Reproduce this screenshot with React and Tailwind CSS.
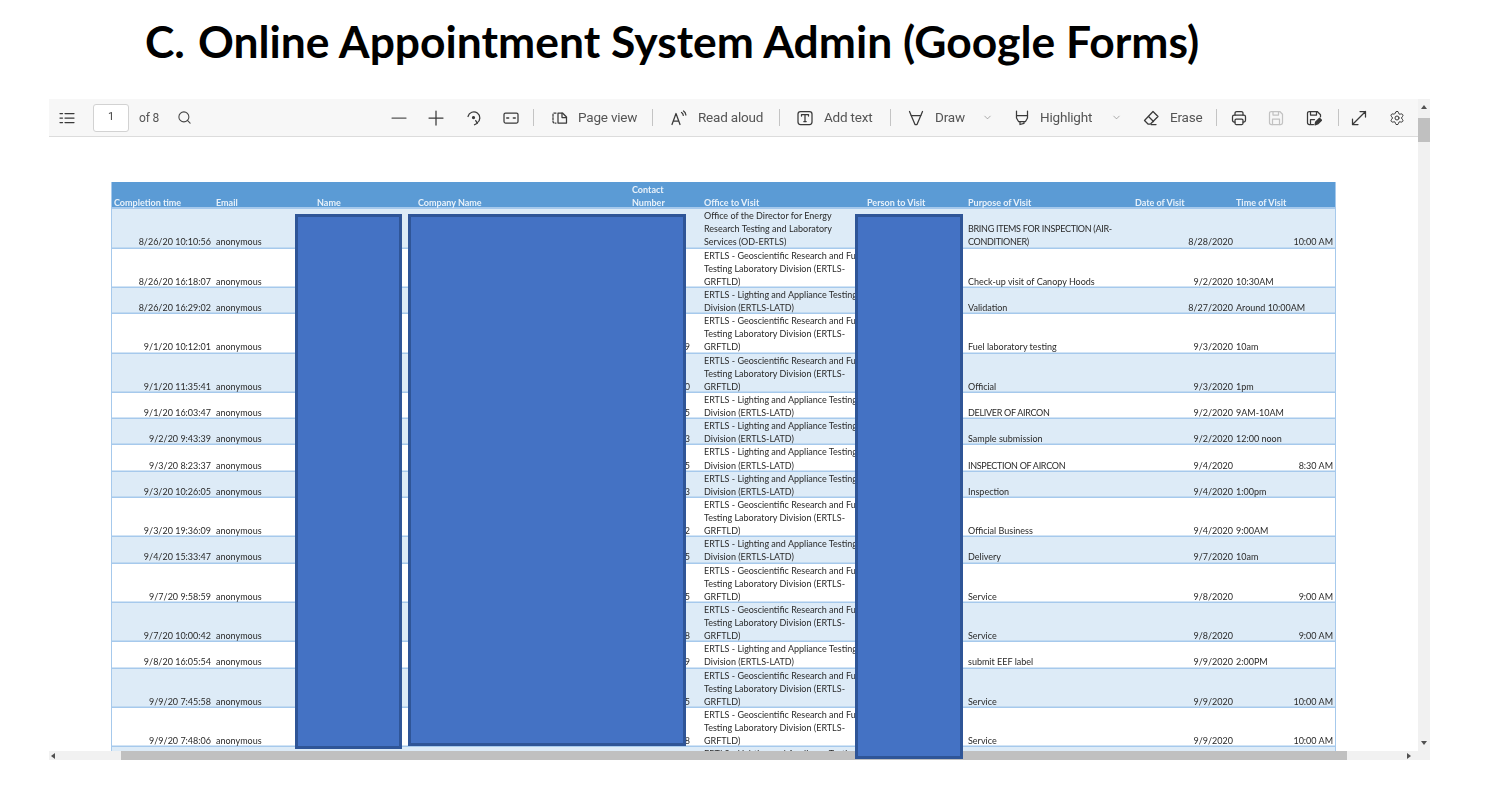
import React from "react";
import { ChevronDown, Search, Settings } from "lucide-react";

const geo = ["ERTLS - Geoscientific Research and Fuel", "Testing Laboratory Division (ERTLS-", "GRFTLD)"];
const lad = ["ERTLS - Lighting and Appliance Testing", "Division (ERTLS-LATD)"];

const rows = [
    { time: "8/26/20 10:10:56", phone: "", office: ["Office of the Director for Energy", "Research Testing and Laboratory", "Services (OD-ERTLS)"], purpose: ["BRING ITEMS FOR INSPECTION (AIR-", "CONDITIONER)"], caps: true, date: "8/28/2020", visit: "10:00 AM", right: true },
    { time: "8/26/20 16:18:07", phone: "", office: geo, purpose: ["Check-up visit of Canopy Hoods"], date: "9/2/2020", visit: "10:30AM" },
    { time: "8/26/20 16:29:02", phone: "", office: lad, purpose: ["Validation"], date: "8/27/2020", visit: "Around 10:00AM" },
    { time: "9/1/20 10:12:01", phone: "9", office: geo, purpose: ["Fuel laboratory testing"], date: "9/3/2020", visit: "10am" },
    { time: "9/1/20 11:35:41", phone: "0", office: geo, purpose: ["Official"], date: "9/3/2020", visit: "1pm" },
    { time: "9/1/20 16:03:47", phone: "5", office: lad, purpose: ["DELIVER OF AIRCON"], caps: true, date: "9/2/2020", visit: "9AM-10AM" },
    { time: "9/2/20 9:43:39", phone: "3", office: lad, purpose: ["Sample submission"], date: "9/2/2020", visit: "12:00 noon" },
    { time: "9/3/20 8:23:37", phone: "5", office: lad, purpose: ["INSPECTION OF AIRCON"], caps: true, date: "9/4/2020", visit: "8:30 AM", right: true },
    { time: "9/3/20 10:26:05", phone: "3", office: lad, purpose: ["Inspection"], date: "9/4/2020", visit: "1:00pm" },
    { time: "9/3/20 19:36:09", phone: "2", office: geo, purpose: ["Official Business"], date: "9/4/2020", visit: "9:00AM" },
    { time: "9/4/20 15:33:47", phone: "5", office: lad, purpose: ["Delivery"], date: "9/7/2020", visit: "10am" },
    { time: "9/7/20 9:58:59", phone: "5", office: geo, purpose: ["Service"], date: "9/8/2020", visit: "9:00 AM", right: true },
    { time: "9/7/20 10:00:42", phone: "8", office: geo, purpose: ["Service"], date: "9/8/2020", visit: "9:00 AM", right: true },
    { time: "9/8/20 16:05:54", phone: "9", office: lad, purpose: ["submit EEF label"], date: "9/9/2020", visit: "2:00PM" },
    { time: "9/9/20 7:45:58", phone: "5", office: geo, purpose: ["Service"], date: "9/9/2020", visit: "10:00 AM", right: true },
    { time: "9/9/20 7:48:06", phone: "8", office: geo, purpose: ["Service"], date: "9/9/2020", visit: "10:00 AM", right: true },
    { time: "9/9/20 8:02:11", phone: "5", office: lad, purpose: ["Service"], date: "9/9/2020", visit: "10:00 AM", right: true },
];

const gridCols = "grid grid-cols-[104px_100px_102px_214px_72px_163px_101px_167px_101px_101px]";

const Icon = ({ children, className = "", stroke = "#3a3a3a" }) => (
    <svg viewBox="0 0 16 16" fill="none" stroke={stroke} strokeWidth="1.25" strokeLinecap="round" strokeLinejoin="round" className={`w-4 h-4 shrink-0 ${className}`}>
        {children}
    </svg>
);

const Sep = ({ className = "" }) => <div className={`w-px h-[17px] bg-[#c4c4c4] shrink-0 ${className}`} />;

const Label = ({ children, className = "" }) => (
    <span className={`text-[13.5px] text-[#555] whitespace-nowrap tracking-[-0.2px] ${className}`}>{children}</span>
);

const Toolbar = () => (
    <div className="h-[38px] shrink-0 bg-[#f7f7f7] border-b border-[#dcdcdc] flex items-center font-['Roboto',sans-serif]">
        <Icon className="ml-[10px]">
            <path d="M1 3.5h2.5M6 3.5h9M1 8h2.5M6 8h9M1 12.5h2.5M6 12.5h9" />
        </Icon>
        <div className="ml-[18px] w-[36px] h-[28px] bg-white border border-[#d2d2d2] rounded-[3px] flex items-center justify-center text-[11px] text-[#444]">1</div>
        <span className="ml-[10px] w-[19px] text-[12px] text-[#555] whitespace-nowrap tracking-[-0.2px]">of 8</span>
        <Search size={15} strokeWidth={1.7} color="#444" className="ml-[19px] shrink-0" />

        <Icon className="ml-[199px]" stroke="#555">
            <path d="M1 8h14" />
        </Icon>
        <Icon className="ml-[21px]">
            <path d="M1 8h14M8 1v14" />
        </Icon>
        <Icon className="ml-[22px]">
            <path d="M2 6.5A6 6 0 1 1 11 13" />
            <path d="M8.5 14.8l2.8-1.6-1.6-2.6" />
            <circle cx="7.5" cy="7.5" r="1" fill="#3a3a3a" />
        </Icon>
        <Icon className="ml-[21px]">
            <rect x="1" y="3" width="14" height="10" rx="1.5" />
            <path d="M3.8 8h1.8M10.4 8h1.8" strokeWidth="1.6" />
        </Icon>
        <Sep className="ml-[14px]" />
        <Icon className="ml-[18px]">
            <path d="M4 3H2.5C1.7 3 1 3.7 1 4.5v7C1 12.3 1.7 13 2.5 13H4" strokeDasharray="2 1.4" />
            <path d="M6 3h4.5L14.5 7v6H6z" />
            <path d="M10 3v4.5h4.5" />
        </Icon>
        <Label className="ml-[10px] w-[58px]">Page view</Label>
        <Sep className="ml-[16px]" />
        <Icon className="ml-[18px]">
            <path d="M1 14.5L5 3.5l4 11M2.4 11h5.2" />
            <path d="M10.5 2.5c1 .6 1.6 1.6 1.8 2.8M12.5 1c1.4.9 2.2 2.3 2.4 4" />
        </Icon>
        <Label className="ml-[11px] w-[64px]">Read aloud</Label>
        <Sep className="ml-[17px]" />
        <Icon className="ml-[17px]">
            <rect x="1" y="1.5" width="14" height="13" rx="2.5" />
            <path d="M4.5 6V4.5h7V6M8 4.5v7M6.8 11.5h2.4" />
        </Icon>
        <Label className="ml-[11px] w-[49px]">Add text</Label>
        <Sep className="ml-[17px]" />
        <Icon className="ml-[17px]">
            <path d="M1.5 1.5L7 14.5h2l5.5-13" />
            <path d="M3.2 5.5h9.6" />
        </Icon>
        <Label className="ml-[11px] w-[31px]">Draw</Label>
        <ChevronDown size={11} strokeWidth={1.3} color="#777" className="ml-[16px] shrink-0" />
        <Icon className="ml-[21px]">
            <path d="M2.5 1v7l2 3.5h7l2-3.5V1" />
            <path d="M2.5 5.5h11" />
            <path d="M6 11.5v3l4-1.2v-1.8" />
        </Icon>
        <Label className="ml-[10px] w-[54px]">Highlight</Label>
        <ChevronDown size={11} strokeWidth={1.3} color="#777" className="ml-[17px] shrink-0" />
        <Icon className="ml-[21px]">
            <path d="M10 1.5L15 6.5l-7 7-1 .5-2 0L1.5 10.5z" />
            <path d="M5.5 6.5l5 5" />
            <path d="M8 14.5h5" />
        </Icon>
        <Label className="ml-[11px] w-[30px]">Erase</Label>
        <Sep className="ml-[16px]" />
        <Icon className="ml-[14px]">
            <path d="M4 5V3.2A1.7 1.7 0 0 1 5.7 1.5h4.6A1.7 1.7 0 0 1 12 3.2V5" />
            <path d="M4 12H3.2a1.7 1.7 0 0 1-1.7-1.7V6.7A1.7 1.7 0 0 1 3.2 5h9.6a1.7 1.7 0 0 1 1.7 1.7v3.6a1.7 1.7 0 0 1-1.7 1.7H12" />
            <rect x="4" y="9" width="8" height="5.5" rx="1.2" />
        </Icon>
        <Icon className="ml-[21px]" stroke="#c2c2c2">
            <path d="M3.2 1.5h8.6l2.7 2.7v8.6a1.7 1.7 0 0 1-1.7 1.7H3.2a1.7 1.7 0 0 1-1.7-1.7V3.2a1.7 1.7 0 0 1 1.7-1.7z" />
            <path d="M5 1.5v3.5h5.5V1.5M4.5 14.5V9h7v5.5" />
        </Icon>
        <Icon className="ml-[22px]">
            <path d="M7.5 14.5H3.2a1.7 1.7 0 0 1-1.7-1.7V3.2a1.7 1.7 0 0 1 1.7-1.7h8l3.3 3.3v2" />
            <path d="M4.5 1.5v3.5h6V1.5M4.5 14V9.5h4" />
            <path d="M9 14.8l.7-2.8 3.8-3.8 2 2-3.8 3.8z" fill="#3a3a3a" />
        </Icon>
        <Sep className="ml-[16px]" />
        <Icon className="ml-[12px]">
            <path d="M1.5 14.5l13-13M9 1.5h5.5V7M1.5 9v5.5H7" />
        </Icon>
        <Settings size={16} strokeWidth={1.5} color="#3a3a3a" className="ml-[22px] shrink-0" />
    </div>
);

const HeaderRow = () => (
    <div className={`${gridCols} h-[27.2px] items-end bg-[#5b9bd5] text-[#e9f2fa] font-bold leading-[13.13px] shadow-[inset_0_-2px_0_#a6c9ec]`}>
        <div className="pl-[2px]">Completion time</div>
        <div>Email</div>
        <div className="pl-[1px]">Name</div>
        <div>Company Name</div>
        <div>Contact<br />Number</div>
        <div>Office to Visit</div>
        <div>Person to Visit</div>
        <div>Purpose of Visit</div>
        <div>Date of Visit</div>
        <div>Time of Visit</div>
    </div>
);

const DataRow = ({ row, index }) => (
    <div className={`${gridCols} items-end leading-[13.13px] text-[#2a2a2a] shadow-[inset_0_-1.5px_0_#a6c9ec] ${index % 2 === 0 ? "bg-[#ddebf7]" : "bg-white"}`}>
        <div className="text-right pr-[5px]">{row.time}</div>
        <div>anonymous</div>
        <div />
        <div>{index === 13 ? "I" : ""}</div>
        <div className="text-right pr-[14px]">{row.phone}</div>
        <div className="overflow-hidden whitespace-nowrap">
            {row.office.map((line) => <div key={line}>{line}</div>)}
        </div>
        <div />
        <div className={`whitespace-nowrap ${row.caps ? "tracking-[-0.3px]" : ""}`}>
            {row.purpose.map((line) => <div key={line}>{line}</div>)}
        </div>
        <div className="text-right pr-[3px]">{row.date}</div>
        <div className={row.right ? "text-right pr-[4px]" : "whitespace-nowrap"}>{row.visit}</div>
    </div>
);

const Redaction = ({ className }) => (
    <div className={`absolute bg-[#4472c4] border-[3px] border-[#2f5597] ${className}`} />
);

export default function App() {
    return (
        <div className="w-[1488px] h-[791px] bg-white overflow-hidden">
            <div className="h-[99px] pl-[145px] pt-[12px] flex font-['Lato',sans-serif] font-bold text-[44.4px] leading-[58px] text-black whitespace-nowrap">
                <span className="w-[53px]">C.</span>
                <span>Online Appointment System Admin (Google Forms)</span>
            </div>

            <div className="relative ml-[49px] w-[1381px] h-[661px] flex flex-col blur-[0.4px]">
                <div className="flex flex-1 min-h-0">
                    <div className="flex-1 min-w-0 flex flex-col">
                        <Toolbar />
                        <div className="flex-1 min-h-0 overflow-hidden bg-white pl-[62px] pt-[45px] font-['Lato',sans-serif] text-[9px]">
                            <div className="w-[1225px] border-x border-[#a6c9ec]">
                                <HeaderRow />
                                {rows.map((row, i) => <DataRow key={row.time} row={row} index={i} />)}
                            </div>
                        </div>
                    </div>
                    <div className="w-[12px] bg-[#f1f1f1] flex flex-col items-center">
                        <div className="mt-[6px] w-0 h-0 border-x-[3px] border-x-transparent border-b-[4px] border-b-[#505050]" />
                        <div className="mt-[9px] w-full h-[24px] bg-[#c0c0c0]" />
                        <div className="mt-auto mb-[6px] w-0 h-0 border-x-[3px] border-x-transparent border-t-[4px] border-t-[#505050]" />
                    </div>
                </div>
                <div className="h-[9px] shrink-0 bg-[#f1f1f1] flex items-center">
                    <div className="ml-[2px] w-0 h-0 border-y-[3px] border-y-transparent border-r-[4px] border-r-[#505050]" />
                    <div className="ml-[66px] w-[1226px] h-full bg-[#c0c0c0]" />
                    <div className="ml-[60px] w-0 h-0 border-y-[3px] border-y-transparent border-l-[4px] border-l-[#505050]" />
                </div>

                <Redaction className="left-[246px] top-[115px] w-[107px] h-[535px]" />
                <Redaction className="left-[359px] top-[115px] w-[278px] h-[532px]" />
                <Redaction className="left-[806px] top-[115px] w-[108px] h-[545px]" />
            </div>
        </div>
    );
}
